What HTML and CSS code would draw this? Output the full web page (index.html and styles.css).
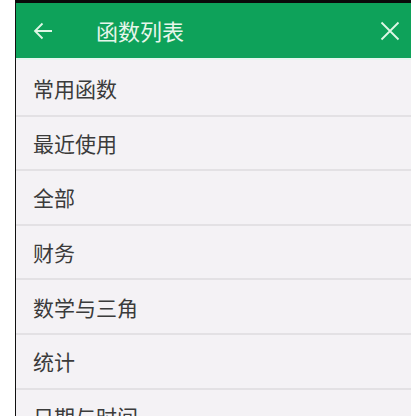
FILE: index.html
```html
<!DOCTYPE html>
<html lang="zh-CN">
<head>
    <meta charset="UTF-8">
    <meta name="viewport" content="width=device-width, initial-scale=1.0">
    <title>函数列表</title>
    <link rel="stylesheet" href="styles.css">
</head>
<body>

<div class="screen">
    <div class="top-bar">
        <svg class="back-icon" width="20" height="20" viewBox="0 0 20 20">
            <path d="M19 10H2M9.5 2.5L2 10l7.5 7.5" fill="none" stroke="#dff7e6" stroke-width="1.8"/>
        </svg>
        <span class="title">函数列表</span>
        <svg class="close-icon" width="20" height="20" viewBox="0 0 20 20">
            <path d="M1.5 1.5l17 17M18.5 1.5l-17 17" fill="none" stroke="#dff7e6" stroke-width="1.8"/>
        </svg>
    </div>

    <ul class="category-list">
        <li>常用函数</li>
        <li>最近使用</li>
        <li>全部</li>
        <li>财务</li>
        <li>数学与三角</li>
        <li>统计</li>
        <li>日期与时间</li>
    </ul>
</div>

</body>
</html>
```

FILE: styles.css
```css
body {
    margin: 0;
    background-color: #fff;
    font-family: "Noto Sans CJK SC", "Noto Sans", sans-serif;
    overflow: hidden;
}

.screen {
    margin-left: 15px;
    height: 416px;
    border-left: 1px solid #111;
    border-top: 3px solid #0a0a0a;
    background-color: #f4f2f5;
    overflow: hidden;
}

.top-bar {
    display: flex;
    align-items: center;
    height: 55px;
    padding: 0 11px 0 17px;
    background-color: #0ea25a;
    border-bottom: 2px solid #e4f6ee;
}

.back-icon {
    flex-shrink: 0;
}

.title {
    flex: 1;
    margin-left: 43px;
    margin-top: -2px;
    color: #e6f6eb;
    font-size: 22px;
}

.close-icon {
    flex-shrink: 0;
}

.category-list {
    list-style: none;
    margin: 0;
    padding: 0;
}

.category-list li {
    height: 52.6px;
    box-sizing: content-box;
    display: flex;
    align-items: center;
    padding: 2px 0 0 17px;
    margin-top: -2px;
    color: #3b3b3b;
    font-size: 21px;
    border-bottom: 2px solid #e3e1e4;
}

.category-list li:first-child {
    margin-top: 0;
}
```
